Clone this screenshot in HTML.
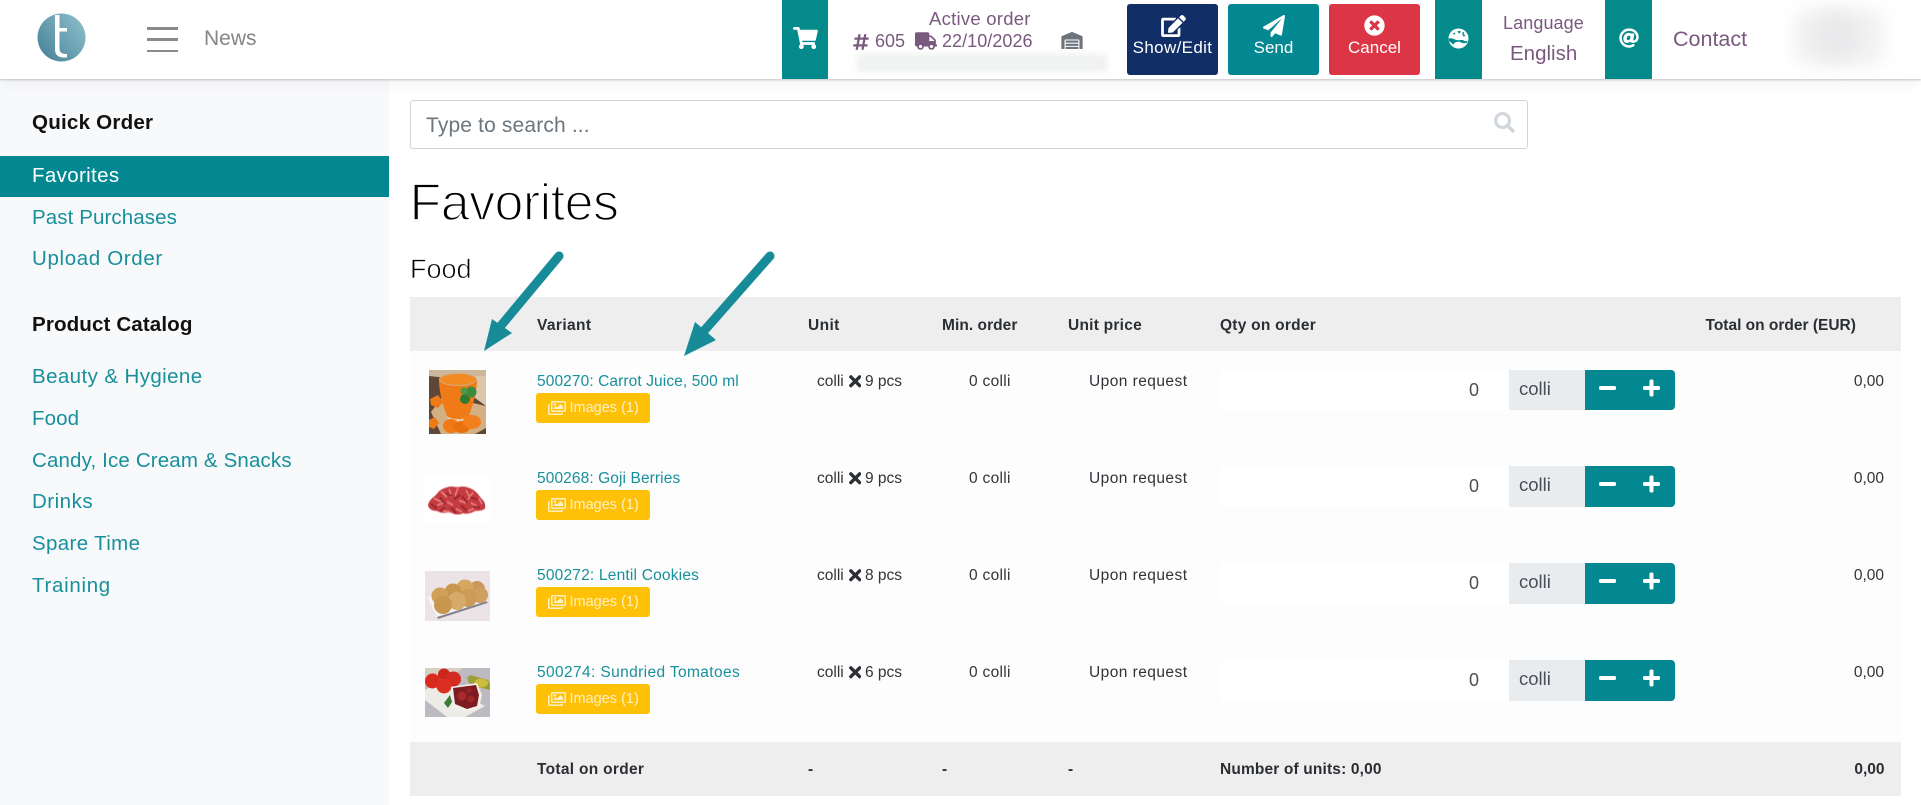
<!DOCTYPE html>
<html lang="en">
<head>
<meta charset="utf-8">
<title>Favorites</title>
<style>
html,body{margin:0;padding:0;background:#fff}
body{position:relative;width:1921px;height:805px;overflow:hidden;font-family:"Liberation Sans",sans-serif;color:#212529}
.a{position:absolute}
.t{position:absolute;white-space:nowrap;line-height:30px;height:30px}
.hdr{position:absolute;left:0;top:0;width:1921px;height:79px;background:#fff;box-shadow:0 1px 2px rgba(0,0,0,.2),0 4px 14px rgba(0,0,0,.05);z-index:5}
.side{position:absolute;left:0;top:79px;width:389px;height:726px;background:#f8f9fb}
.p{color:#7a597e}
.tb{position:absolute;top:0;height:79px;width:47px;background:#048a8a}
.btn{position:absolute;top:4px;width:91px;height:71px;border-radius:3px;color:#fff;text-align:center}
.btn svg{position:absolute;top:11px;fill:#fff}
.btn span{position:absolute;left:0;right:0;top:33px;line-height:22px;font-size:17px}
.lnk{color:#17909c;font-size:20.5px;letter-spacing:.1px;left:32px}
.sh{color:#111;font-weight:bold;font-size:20.6px;left:32px}
.th{font-weight:bold;font-size:15.5px;letter-spacing:.05px;color:#2b2f33;top:310.5px}
.row{position:absolute;left:410px;width:1491px;height:97px;background:#fdfdfd}
.row .v{position:absolute;left:127px;top:16px;line-height:30px;font-size:15.5px;letter-spacing:.1px;color:#17909c;white-space:nowrap}
.row .img{position:absolute;left:126px;top:42px;width:114px;height:30px;background:#ffc107;border-radius:3px;color:#fdf0c4;font-size:14.5px;line-height:30px;white-space:nowrap}
.row .img svg{position:absolute;left:12px;top:7px;fill:#fdf0c4}
.row .img span{position:absolute;left:33.5px}
.row .c{position:absolute;top:16px;line-height:30px;font-size:15.5px;color:#303438;white-space:nowrap}
.row .x{position:absolute;left:438.5px;top:24px;fill:#2b2f33}
.row .q{position:absolute;left:810px;top:19px;width:289px;height:40px;background:#fff;color:#495057;font-size:18px;line-height:40px;text-align:right;box-sizing:border-box;padding-right:30px}
.row .u{position:absolute;left:1099px;top:19px;width:76px;height:40px;background:#e9ecef;color:#495057;font-size:18.5px;line-height:38px;box-sizing:border-box;padding-left:10px}
.row .b{position:absolute;left:1175px;top:19px;width:90px;height:40px;background:#038891;border-radius:0 4px 4px 0}
.row .b svg{position:absolute;left:0;top:0}
.row.m .q,.row.m .u,.row.m .b{top:18px;height:41px}
.row .th2{position:absolute;right:17px;top:16px;line-height:30px;font-size:15.5px;color:#303438}
.foot{font-weight:bold;font-size:15.5px;color:#2b2f33;top:755px}
</style>
</head>
<body>
<svg width="0" height="0" style="position:absolute">
  <defs>
    <filter id="bl" x="0" y="0" width="100%" height="100%"><feGaussianBlur stdDeviation=".35"/></filter>
    <symbol id="ic-img" viewBox="0 0 576 512"><path d="M480 416v16c0 26.51-21.49 48-48 48H48c-26.51 0-48-21.49-48-48V176c0-26.51 21.49-48 48-48h16v48H54a6 6 0 0 0-6 6v244a6 6 0 0 0 6 6h372a6 6 0 0 0 6-6v-10h48zm42-336H150a6 6 0 0 0-6 6v244a6 6 0 0 0 6 6h372a6 6 0 0 0 6-6V86a6 6 0 0 0-6-6zm6-48c26.51 0 48 21.49 48 48v256c0 26.51-21.49 48-48 48H144c-26.51 0-48-21.49-48-48V80c0-26.51 21.49-48 48-48h384zM264 144c0 22.091-17.909 40-40 40s-40-17.909-40-40 17.909-40 40-40 40 17.909 40 40zm-72 96l39.515-39.515c4.686-4.686 12.284-4.686 16.971 0L288 240l103.515-103.515c4.686-4.686 12.284-4.686 16.971 0L480 208v80H192v-48z"/></symbol>
    <symbol id="ic-x" viewBox="0 80 352 352"><path d="M242.72 256l100.07-100.07c12.28-12.28 12.28-32.19 0-44.48l-22.24-22.24c-12.28-12.28-32.19-12.28-44.48 0L176 189.28 75.93 89.21c-12.28-12.28-32.19-12.28-44.48 0L9.21 111.45c-12.28 12.28-12.28 32.19 0 44.48L109.28 256 9.21 356.07c-12.28 12.28-12.28 32.19 0 44.48l22.24 22.24c12.28 12.28 32.2 12.28 44.48 0L176 322.72l100.07 100.07c12.28 12.28 32.2 12.28 44.48 0l22.24-22.24c12.28-12.28 12.28-32.19 0-44.48L242.72 256z"/></symbol>
    <symbol id="ic-pm" viewBox="0 0 90 41"><rect x="14" y="16" width="17" height="4" rx="1.5" fill="#fff"/><rect x="58" y="16" width="17" height="4" rx="1.5" fill="#fff"/><rect x="64.500" y="9.500" width="4" height="17" rx="1.5" fill="#fff"/></symbol>
  </defs>
</svg>

<!-- header -->
<div class="hdr">
  <svg class="a" style="left:37px;top:13px" width="49" height="49" viewBox="0 0 49 49">
    <defs><linearGradient id="lg" x1="0" y1="1" x2="1" y2="0.2"><stop offset="0" stop-color="#437f95"/><stop offset="1" stop-color="#8bbcc9"/></linearGradient></defs>
    <circle cx="24.5" cy="24.5" r="24" fill="url(#lg)"/>
    <path d="M18 2h4.500v13h7.500v3.500h-7.500v17c0 4 2 5.500 7.500 5.500v3.500c-8 .5-12-2-12-8z" fill="#fff"/>
  </svg>
  <div class="a" style="left:147px;top:27px;width:31px;height:2.500px;background:#8a8a8a"></div>
  <div class="a" style="left:147px;top:38px;width:31px;height:2.500px;background:#8a8a8a"></div>
  <div class="a" style="left:147px;top:49.500px;width:31px;height:2.500px;background:#8a8a8a"></div>
  <div class="t" style="left:204px;top:24px;font-size:21px;color:#858585">News</div>

  <div class="tb" style="left:782px;width:46px"></div>
  <svg class="a" style="left:793px;top:27px" width="25" height="22" viewBox="0 0 576 512" fill="#fff"><path d="M528.12 301.319l47.273-208C578.806 78.301 567.391 64 551.99 64H159.208l-9.166-44.81C147.758 8.021 137.93 0 126.529 0H24C10.745 0 0 10.745 0 24v16c0 13.255 10.745 24 24 24h69.883l70.248 343.435C147.325 417.1 136 435.222 136 456c0 30.928 25.072 56 56 56s56-25.072 56-56c0-15.674-6.447-29.835-16.824-40h209.647C430.447 426.165 424 440.326 424 456c0 30.928 25.072 56 56 56s56-25.072 56-56c0-22.172-12.888-41.332-31.579-50.405l5.517-24.276c3.413-15.018-8.002-29.319-23.403-29.319H218.117l-6.545-32h293.145c11.206 0 20.92-7.754 23.403-18.681z"/></svg>

  <div class="t p" style="left:929px;top:3.500px;font-size:18.500px;letter-spacing:.25px">Active order</div>
  <svg class="a" style="left:853px;top:33px" width="16" height="18" viewBox="0 0 448 512" fill="#7a597e"><path d="M440.667 182.109l7.143-40c1.313-7.355-4.342-14.109-11.813-14.109h-74.81l14.623-81.891C377.123 38.754 371.468 32 363.997 32h-40.632a12 12 0 0 0-11.813 9.891L296.175 128H197.54l14.623-81.891C213.477 38.754 207.822 32 200.35 32h-40.632a12 12 0 0 0-11.813 9.891L132.528 128H53.432a12 12 0 0 0-11.813 9.891l-7.143 40C33.163 185.246 38.818 192 46.289 192h74.81L98.242 320H19.146a12 12 0 0 0-11.813 9.891l-7.143 40C-1.123 377.246 4.532 384 12.003 384h74.81L72.19 465.891C70.877 473.246 76.532 480 84.003 480h40.632a12 12 0 0 0 11.813-9.891L151.826 384h98.634l-14.623 81.891C234.523 473.246 240.178 480 247.65 480h40.632a12 12 0 0 0 11.813-9.891L315.472 384h79.096a12 12 0 0 0 11.813-9.891l7.143-40c1.313-7.355-4.342-14.109-11.813-14.109h-74.81l22.857-128h79.096a12 12 0 0 0 11.813-9.891zM261.889 320h-98.634l22.857-128h98.634l-22.857 128z"/></svg>
  <div class="t p" style="left:875px;top:26px;font-size:18px">605</div>
  <svg class="a" style="left:915px;top:32px" width="22" height="18" viewBox="0 0 640 512" fill="#7a597e"><path d="M624 352h-16V243.9c0-12.7-5.1-24.9-14.1-33.9L494 110.1c-9-9-21.2-14.1-33.9-14.1H416V48c0-26.5-21.5-48-48-48H48C21.5 0 0 21.5 0 48v320c0 26.5 21.5 48 48 48h16c0 53 43 96 96 96s96-43 96-96h128c0 53 43 96 96 96s96-43 96-96h48c8.8 0 16-7.2 16-16v-32c0-8.8-7.2-16-16-16zM160 464c-26.5 0-48-21.5-48-48s21.5-48 48-48 48 21.5 48 48-21.5 48-48 48zm320 0c-26.5 0-48-21.5-48-48s21.5-48 48-48 48 21.5 48 48-21.5 48-48 48zm80-208H416V144h44.1l99.900 99.900V256z"/></svg>
  <div class="t p" style="left:942px;top:26px;font-size:18px;letter-spacing:.05px">22/10/2026</div>
  <svg class="a" style="left:1061px;top:32px" width="22" height="17" viewBox="0 0 640 512" fill="#6c757d"><path d="M504 352H136.4c-4.4 0-8 3.6-8 8l-.1 48c0 4.4 3.6 8 8 8H504c4.4 0 8-3.6 8-8v-48c0-4.4-3.6-8-8-8zm0 96H136.1c-4.4 0-8 3.6-8 8l-.1 48c0 4.4 3.6 8 8 8h368c4.4 0 8-3.6 8-8v-48c0-4.4-3.6-8-8-8zm0-192H136.6c-4.4 0-8 3.6-8 8l-.1 48c0 4.4 3.6 8 8 8H504c4.4 0 8-3.6 8-8v-48c0-4.4-3.6-8-8-8zm106.5-139L338.4 3.7a48.15 48.15 0 0 0-36.9 0L29.5 117C11.7 124.5 0 141.9 0 161.3V504c0 4.4 3.6 8 8 8h80c4.4 0 8-3.6 8-8V256c0-17.6 14.6-32 32.6-32h382.8c18 0 32.6 14.4 32.6 32v248c0 4.4 3.6 8 8 8h80c4.4 0 8-3.6 8-8V161.3c0-19.4-11.7-36.8-29.5-44.3z"/></svg>
  <div class="a" style="left:857px;top:54px;width:250px;height:18px;background:#f0f1f1;filter:blur(3px)"></div>

  <div class="btn" style="left:1127px;background:#112f66">
    <svg style="left:33px" width="27" height="22" viewBox="0 0 576 512"><path d="M402.6 83.2l90.2 90.2c3.8 3.8 3.8 10 0 13.8L274.4 405.6l-92.8 10.3c-12.4 1.4-22.9-9.1-21.5-21.5l10.3-92.8L388.8 83.2c3.8-3.8 10-3.8 13.8 0zm162-22.9l-48.8-48.8c-15.2-15.2-39.9-15.2-55.2 0l-35.4 35.4c-3.8 3.8-3.8 10 0 13.8l90.2 90.2c3.8 3.8 10 3.8 13.8 0l35.4-35.4c15.2-15.3 15.2-40 0-55.2zM384 346.2V448H64V128h229.8c3.2 0 6.2-1.3 8.5-3.5l40-40c7.6-7.6 2.2-20.5-8.5-20.5H48C21.5 64 0 85.5 0 112v352c0 26.5 21.5 48 48 48h352c26.500 0 48-21.500 48-48V306.2c0-10.700-12.900-16-20.500-8.500l-40 40c-2.200 2.300-3.500 5.300-3.500 8.500z"/></svg>
    <span style="letter-spacing:.35px">Show/Edit</span>
  </div>
  <div class="btn" style="left:1228px;background:#038891">
    <svg style="left:35px" width="22" height="22" viewBox="0 0 512 512"><path d="M476 3.2L12.5 270.6c-18.1 10.4-15.8 35.6 2.2 43.2L121 358.4l287.3-253.2c5.5-4.9 13.3 2.6 8.6 8.3L176 407v80.5c0 23.6 28.5 32.9 42.5 15.8L282 426l124.6 52.2c14.2 6 30.4-2.9 33-18.2l72-432C515 7.8 493.3-6.8 476 3.2z"/></svg>
    <span>Send</span>
  </div>
  <div class="btn" style="left:1329px;background:#dc3545">
    <svg style="left:35px" width="21" height="21" viewBox="0 0 512 512"><path d="M256 8C119 8 8 119 8 256s111 248 248 248 248-111 248-248S393 8 256 8zm121.6 313.1c4.7 4.7 4.7 12.3 0 17L338 377.6c-4.7 4.7-12.3 4.7-17 0L256 312l-65.1 65.600c-4.700 4.700-12.300 4.700-17 0L134.400 338c-4.700-4.700-4.700-12.300 0-17l65.600-65-65.600-65.100c-4.700-4.700-4.700-12.300 0-17l39.600-39.600c4.700-4.700 12.300-4.700 17 0l65 65.700 65.100-65.600c4.700-4.700 12.300-4.700 17 0l39.600 39.600c4.700 4.700 4.700 12.300 0 17L312 256l65.600 65.100z"/></svg>
    <span>Cancel</span>
  </div>

  <div class="tb" style="left:1435px"></div>
  <svg class="a" style="left:1448px;top:28px" width="21" height="21" viewBox="0 0 21 21">
    <circle cx="10.500" cy="10.500" r="10" fill="#fff"/>
    <path d="M.8 10.500c2.500-.5 4.500 0 6 1l3 .8 4.500-.4 3 1.300 2.500-.5-1.200 2.300-3.500.2-4.200-1.600-3.500.6-2.200 2.300-2.700-2.300C.5 13 .6 12 .8 10.500z" fill="#048a8a"/>
    <path d="M9.500 3.500l2.500-1 .8 1.700-2 1.300zM14.500 3.800l1.500.6-.3 2.200 1.900.7-1.800 1.600-1.400-2.200zM5 5.500l1.500-1 .8 1.500-1.500.8z" fill="#048a8a"/>
  </svg>
  <div class="t p" style="left:1503px;top:8px;font-size:18px;letter-spacing:.1px">Language</div>
  <div class="t p" style="left:1510px;top:39px;font-size:20.500px">English</div>
  <div class="tb" style="left:1605px"></div>
  <svg class="a" style="left:1619px;top:28px" width="20" height="20" viewBox="0 0 512 512" fill="#fff"><path d="M256 8C118.941 8 8 118.919 8 256c0 137.059 110.919 248 248 248 48.154 0 95.342-14.14 135.408-40.223 12.005-7.815 14.625-24.288 5.552-35.372l-10.177-12.433c-7.671-9.371-21.179-11.667-31.373-5.129C325.92 429.757 291.314 440 256 440c-101.458 0-184-82.542-184-184S154.542 72 256 72c100.139 0 184 57.619 184 160 0 38.786-21.093 79.742-58.17 83.693-17.349-.454-16.91-12.857-13.476-30.024l23.433-121.11C394.653 149.75 383.308 136 368.225 136h-44.981a13.518 13.518 0 0 0-13.432 11.993l-.01.092c-14.697-17.901-40.448-21.775-59.971-21.775-74.58 0-137.831 62.234-137.831 151.46 0 65.303 36.785 105.87 96 105.87 26.984 0 57.369-15.637 74.991-38.333 9.522 34.104 40.613 34.103 70.71 34.103C462.609 379.41 504 307.798 504 232 504 95.653 394.023 8 256 8zm-21.68 304.43c-22.249 0-36.07-15.623-36.07-40.771 0-44.993 30.779-72.729 58.63-72.729 22.292 0 35.601 15.241 35.601 40.77 0 45.061-33.875 72.73-58.161 72.73z"/></svg>
  <div class="t p" style="left:1673px;top:24px;font-size:21.500px">Contact</div>
  <div class="a" style="left:1793px;top:8px;width:92px;height:58px;background:#f3f3f4;border-radius:14px;filter:blur(8px)"></div>
  <div class="a" style="left:1812px;top:12px;width:50px;height:48px;background:#e9e8ea;border-radius:50%;filter:blur(9px)"></div>
</div>

<!-- sidebar -->
<div class="side"></div>
<div class="t sh" style="top:107.500px;letter-spacing:.2px">Quick Order</div>
<div class="a" style="left:0;top:156px;width:389px;height:41px;background:#038891"></div>
<div class="t lnk" style="top:161px;color:#fff;letter-spacing:.35px">Favorites</div>
<div class="t lnk" style="top:203px">Past Purchases</div>
<div class="t lnk" style="top:244px;letter-spacing:.65px">Upload Order</div>
<div class="t sh" style="top:310px;letter-spacing:.1px">Product Catalog</div>
<div class="t lnk" style="top:362px;letter-spacing:.4px">Beauty &amp; Hygiene</div>
<div class="t lnk" style="top:404px">Food</div>
<div class="t lnk" style="top:445.500px;letter-spacing:.15px">Candy, Ice Cream &amp; Snacks</div>
<div class="t lnk" style="top:487px;letter-spacing:.5px">Drinks</div>
<div class="t lnk" style="top:528.500px;letter-spacing:.35px">Spare Time</div>
<div class="t lnk" style="top:570.500px;letter-spacing:.7px">Training</div>

<!-- search -->
<div class="a" style="left:410px;top:100px;width:1118px;height:49px;box-sizing:border-box;border:1.500px solid #ced4da;border-radius:3px;background:#fff"></div>
<div class="t" style="left:426px;top:110.500px;font-size:21px;letter-spacing:.15px;color:#6c757d">Type to search ...</div>
<svg class="a" style="left:1494px;top:112px" width="21" height="21" viewBox="0 0 512 512" fill="#d2d7dc"><path d="M505 442.7L405.3 343c-4.5-4.5-10.6-7-17-7H372c27.6-35.3 44-79.7 44-128C416 93.1 322.9 0 208 0S0 93.1 0 208s93.1 208 208 208c48.3 0 92.7-16.4 128-44v16.3c0 6.4 2.5 12.5 7 17l99.7 99.7c9.4 9.4 24.6 9.4 33.9 0l28.3-28.3c9.4-9.4 9.4-24.6.1-34zM208 336c-70.7 0-128-57.2-128-128 0-70.7 57.2-128 128-128 70.7 0 128 57.2 128 128 0 70.7-57.2 128-128 128z"/></svg>

<div class="a" style="left:409.500px;top:172px;line-height:62px;font-size:52px;letter-spacing:-.55px;color:#000;white-space:nowrap;-webkit-text-stroke:1.700px #fff">Favorites</div>
<div class="a" style="left:410px;top:251px;line-height:36px;font-size:27px;color:#000;white-space:nowrap;-webkit-text-stroke:.7px #fff">Food</div>

<!-- table header -->
<div class="a" style="left:410px;top:297px;width:1491px;height:55px;background:#eee"></div>
<div class="t th" style="left:537px;letter-spacing:.4px">Variant</div>
<div class="t th" style="left:808px;letter-spacing:.4px">Unit</div>
<div class="t th" style="left:942px">Min. order</div>
<div class="t th" style="left:1068px;letter-spacing:.25px">Unit price</div>
<div class="t th" style="left:1220px;letter-spacing:.25px">Qty on order</div>
<div class="t th" style="left:1705.500px;letter-spacing:0">Total on order (EUR)</div>

<!-- row 1 -->
<div class="row" style="top:351px">
  <svg class="a" style="left:19px;top:19px" width="57" height="64" viewBox="0 0 57 64">
    <g filter="url(#bl)">
    <rect width="57" height="64" fill="#5e4637"/>
    <path d="M0 0h57v12L0 6z" fill="#cdb79c"/>
    <path d="M40 6h17v30l-11-8z" fill="#dcc6aa"/>
    <path d="M2 42L14 26l43 10v22l-11 6H12z" fill="#d3b083"/>
    <path d="M10 10C12 2 44 2 48 10c0 14-6 30-8 36-4 4-18 4-22 0C14 36 10 22 10 10z" fill="#f07a12"/>
    <ellipse cx="29" cy="9.500" rx="18.500" ry="6" fill="#f38a22" stroke="#d2a982" stroke-width="1"/>
    <path d="M18 46c4 4 18 4 22 0l-1 4c-4 3-16 3-20 0z" fill="#e6c8a2"/>
    <circle cx="36" cy="29" r="5" fill="#2f7a36"/><circle cx="42" cy="22" r="5.500" fill="#3a8a3e"/><circle cx="35" cy="21" r="3.500" fill="#4b9a48"/>
    <path d="M1 29l8-4 5 7-5 6-7-3z" fill="#ee7a16"/>
    <path d="M0 50l6-3 4 6-5 6-5-2z" fill="#ee7a16"/>
    <ellipse cx="22" cy="56" rx="8" ry="7" fill="#f17a12"/><ellipse cx="33" cy="57" rx="8" ry="6" fill="#e86f0e"/><ellipse cx="43" cy="52" rx="9" ry="7" fill="#f2801a"/>
    </g>
  </svg>
  <div class="v">500270: Carrot Juice, 500 ml</div>
  <div class="img"><svg width="18" height="16"><use href="#ic-img"/></svg><span>Images (1)</span></div>
  <div class="c" style="left:407px">colli</div>
  <svg class="x" width="12.500" height="12.500"><use href="#ic-x"/></svg>
  <div class="c" style="left:455px">9 pcs</div>
  <div class="c" style="left:559px;letter-spacing:.3px">0 colli</div>
  <div class="c" style="left:679px;letter-spacing:.45px">Upon request</div>
  <div class="q">0</div><div class="u">colli</div>
  <div class="b"><svg width="90" height="41"><use href="#ic-pm"/></svg></div>
  <div class="th2">0,00</div>
</div>

<!-- row 2 -->
<div class="row m" style="top:448px">
  <svg class="a" style="left:15px;top:27px" width="65" height="48" viewBox="0 0 65 48">
    <rect width="65" height="48" fill="#fff"/>
    <g filter="url(#bl)" transform="translate(0 -2) scale(1 1.15)">
    <path d="M3 28c1-5 6-7 9-10 3-4 8-5 12-6 4-1 7 1 11 0 5-1 9 1 12 2 4 2 7 5 9 8 3 2 5 5 4 9-3 2-7 2-10 2-4 2-8 3-12 2-5 2-9 1-13-1-5 1-9 1-13-1-4 0-8-1-9-5z" fill="#c43a40"/>
    <g stroke="#ea7f80" stroke-width="1.500" fill="none">
      <path d="M9 22l7 3M16 16l6 5M24 14l3 7M33 13l-3 7M41 15l4 6M48 17l-5 6M54 22l3 5M12 28l7-2M22 25l6 3M34 24l7 2M46 26l6 3M18 33l7 1M31 31l6 3M43 33l6-2"/>
    </g>
    <g stroke="#962229" stroke-width="1.500" fill="none">
      <path d="M6 27l6 4M15 21l5 6M21 18l7 2M29 23l6-4M37 20l5 6M45 21l7 2M26 30l5 5M36 28l6 5M48 29l7 1M20 30l-5 3"/>
    </g>
    </g>
  </svg>
  <div class="v">500268: Goji Berries</div>
  <div class="img"><svg width="18" height="16"><use href="#ic-img"/></svg><span>Images (1)</span></div>
  <div class="c" style="left:407px">colli</div>
  <svg class="x" width="12.500" height="12.500"><use href="#ic-x"/></svg>
  <div class="c" style="left:455px">9 pcs</div>
  <div class="c" style="left:559px;letter-spacing:.3px">0 colli</div>
  <div class="c" style="left:679px;letter-spacing:.45px">Upon request</div>
  <div class="q">0</div><div class="u">colli</div>
  <div class="b"><svg width="90" height="41"><use href="#ic-pm"/></svg></div>
  <div class="th2">0,00</div>
</div>

<!-- row 3 -->
<div class="row m" style="top:545px">
  <svg class="a" style="left:15px;top:26px" width="65" height="50" viewBox="0 0 65 50">
    <g filter="url(#bl)">
    <rect width="65" height="50" fill="#ebe3e5"/>
    <path d="M2 26l53-9 7 13-50 16z" fill="#f4f4f6"/>
    <path d="M12 46l50-16 .5 2L13 48z" fill="#858590"/>
    <circle cx="52" cy="18" r="8" fill="#c9985a"/><circle cx="55" cy="24" r="8" fill="#cf9f5e"/>
    <circle cx="40" cy="17" r="8.500" fill="#d4a762"/><circle cx="43" cy="27" r="9" fill="#cc9b58"/>
    <circle cx="28" cy="21" r="8.500" fill="#c89650"/><circle cx="32" cy="30" r="9" fill="#d6aa68"/>
    <circle cx="15" cy="25" r="8.500" fill="#d0a05a"/><circle cx="18" cy="34" r="9" fill="#c99650"/>
    </g>
  </svg>
  <div class="v" style="letter-spacing:.2px">500272: Lentil Cookies</div>
  <div class="img"><svg width="18" height="16"><use href="#ic-img"/></svg><span>Images (1)</span></div>
  <div class="c" style="left:407px">colli</div>
  <svg class="x" width="12.500" height="12.500"><use href="#ic-x"/></svg>
  <div class="c" style="left:455px">8 pcs</div>
  <div class="c" style="left:559px;letter-spacing:.3px">0 colli</div>
  <div class="c" style="left:679px;letter-spacing:.45px">Upon request</div>
  <div class="q">0</div><div class="u">colli</div>
  <div class="b"><svg width="90" height="41"><use href="#ic-pm"/></svg></div>
  <div class="th2">0,00</div>
</div>

<!-- row 4 -->
<div class="row m" style="top:642px;height:100px">
  <svg class="a" style="left:15px;top:26px" width="65" height="49" viewBox="0 0 65 49">
    <g filter="url(#bl)">
    <rect width="65" height="49" fill="#bdbac2"/>
    <path d="M0 0h38L22 12 0 10z" fill="#d6cfc4"/>
    <path d="M0 22l14-8 46 24-20 11H22L0 32z" fill="#ecebe6"/>
    <path d="M42 10l3-3 18 5 2 4v6l-13-3-8-4z" fill="#9b9f38"/><ellipse cx="56" cy="15" rx="7" ry="4.500" fill="#cdbc3c"/>
    <circle cx="7.500" cy="13" r="7.500" fill="#d92a1e"/><circle cx="19" cy="6.500" r="6" fill="#c9261b"/><circle cx="28.500" cy="11" r="7.500" fill="#d52a20"/><circle cx="19" cy="18" r="7.500" fill="#dc2d20"/>
    <path d="M26 19l26-4 5 12-3 13-11 4-15-5z" fill="#f3efe9"/>
    <path d="M28 20l23-3 3 10-2 11-10 3-12-5z" fill="#7d1c22"/>
    <circle cx="37" cy="28" r="4.500" fill="#a82a2c"/><circle cx="46" cy="31" r="3.500" fill="#a12628"/><circle cx="44" cy="22" r="3" fill="#962126"/>
    <path d="M25 27l2 7-4 6-4-5z" fill="#3d7a35"/>
    </g>
  </svg>
  <div class="v" style="letter-spacing:.38px">500274: Sundried Tomatoes</div>
  <div class="img"><svg width="18" height="16"><use href="#ic-img"/></svg><span>Images (1)</span></div>
  <div class="c" style="left:407px">colli</div>
  <svg class="x" width="12.500" height="12.500"><use href="#ic-x"/></svg>
  <div class="c" style="left:455px">6 pcs</div>
  <div class="c" style="left:559px;letter-spacing:.3px">0 colli</div>
  <div class="c" style="left:679px;letter-spacing:.45px">Upon request</div>
  <div class="q">0</div><div class="u">colli</div>
  <div class="b"><svg width="90" height="41"><use href="#ic-pm"/></svg></div>
  <div class="th2">0,00</div>
</div>

<!-- footer row -->
<div class="a" style="left:410px;top:742px;width:1491px;height:54px;background:#eee"></div>
<div class="t foot" style="left:537px;letter-spacing:.3px">Total on order</div>
<div class="t foot" style="left:808px">-</div>
<div class="t foot" style="left:942px">-</div>
<div class="t foot" style="left:1068px">-</div>
<div class="t foot" style="left:1220px;letter-spacing:.15px">Number of units: 0,00</div>
<div class="t foot" style="right:36.500px">0,00</div>

<!-- arrows -->
<svg class="a" style="left:0;top:0;z-index:6" width="1921" height="805" viewBox="0 0 1921 805" fill="#178c98">
  <path d="M559 256L499 328" stroke="#178c98" stroke-width="9" stroke-linecap="round" fill="none"/>
  <path d="M484 351L492 319 512 333z"/>
  <path d="M770 256L703 332" stroke="#178c98" stroke-width="9" stroke-linecap="round" fill="none"/>
  <path d="M684 356L695 322 716 340z"/>
</svg>

</body>
</html>
